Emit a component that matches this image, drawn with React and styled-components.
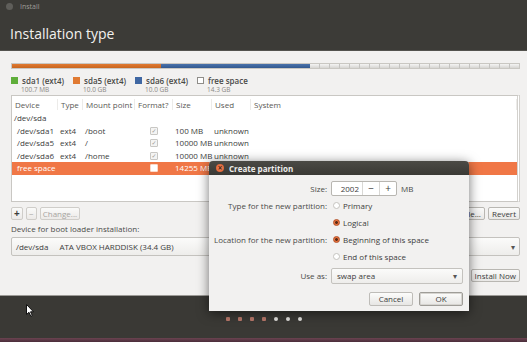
import React from "react"
import styled, { createGlobalStyle } from "styled-components"

const partitions = [
  { name: "sda1 (ext4)", size: "100.7 MB", color: "#5fae3a" },
  { name: "sda5 (ext4)", size: "10.0 GB", color: "#e07a32" },
  { name: "sda6 (ext4)", size: "10.0 GB", color: "#3f67a3" },
  { name: "free space", size: "14.3 GB", color: "#ffffff" },
]

const rows = [
  { device: "/dev/sda", top: true },
  { device: "/dev/sda1", type: "ext4", mount: "/boot", format: true, size: "100 MB", used: "unknown" },
  { device: "/dev/sda5", type: "ext4", mount: "/", format: true, size: "10000 MB", used: "unknown" },
  { device: "/dev/sda6", type: "ext4", mount: "/home", format: true, size: "10000 MB", used: "unknown" },
  { device: "free space", format: false, size: "14255 MB", selected: true },
]

const columns = ["Device", "Type", "Mount point", "Format?", "Size", "Used", "System"]

const App = () => (
  <Window>
    <GlobalStyle />
    <Header>
      <TitleBar>
        <WinDot />
        <WinTitle>Install</WinTitle>
      </TitleBar>
      <PageTitle>Installation type</PageTitle>
    </Header>

    <Content>
      <DiskBar>
        <Segment $w={149} $color="#e07a32" $dark="#c9661f" />
        <Segment $w={149} $color="#4a72ab" $dark="#33598f" />
        <FreeSegment />
      </DiskBar>

      <Legend>
        {partitions.map(p => (
          <LegendItem key={p.name}>
            <LegendName>
              <Swatch $color={p.color} />
              {p.name}
            </LegendName>
            <LegendSize>{p.size}</LegendSize>
          </LegendItem>
        ))}
      </Legend>

      <Table>
        <HeadRow>
          {columns.map(c => <HeadCell key={c}>{c}</HeadCell>)}
        </HeadRow>
        {rows.map(r => (
          <Row key={r.device} $selected={r.selected}>
            <Cell $indent={!r.top}>{r.device}</Cell>
            <Cell>{r.type}</Cell>
            <Cell>{r.mount}</Cell>
            <CheckCell>
              {r.format !== undefined && <Check $checked={r.format} $selected={r.selected}>{r.format ? "✓" : ""}</Check>}
            </CheckCell>
            <Cell>{r.size}</Cell>
            <Cell>{r.used}</Cell>
            <Cell />
          </Row>
        ))}
      </Table>

      <Toolbar>
        <ToolGroup>
          <SmallButton $bold>+</SmallButton>
          <SmallButton $muted>−</SmallButton>
          <SmallButton $muted>Change...</SmallButton>
        </ToolGroup>
        <ToolGroup>
          <Button>New Partition Table...</Button>
          <Button>Revert</Button>
        </ToolGroup>
      </Toolbar>

      <FieldLabel>Device for boot loader installation:</FieldLabel>
      <Combo>
        <span>/dev/sda</span>
        <ComboText>ATA VBOX HARDDISK (34.4 GB)</ComboText>
        <Arrow>▾</Arrow>
      </Combo>

      <Actions>
        <Button>Install Now</Button>
      </Actions>
    </Content>

    <Footer>
      <Dots>
        {[0, 1, 2, 3, 4, 5, 6].map(i => <Dot key={i} $done={i < 4} />)}
      </Dots>
    </Footer>
    <Strip />

    <Cursor width="8" height="13" viewBox="0 0 8 13">
      <path d="M0.5 0.5 L0.5 10.5 L3 8.3 L4.8 12.3 L6.3 11.6 L4.5 7.8 L7.5 7.8 Z" fill="#fff" stroke="#111" strokeWidth="1" />
    </Cursor>

    <Dialog>
      <DialogTitle>
        <CloseButton>×</CloseButton>
        Create partition
      </DialogTitle>
      <DialogBody>
        <FormLabel>Size:</FormLabel>
        <Inline>
          <SpinBox>
            <SpinValue>2002</SpinValue>
            <SpinButton>−</SpinButton>
            <SpinButton>+</SpinButton>
          </SpinBox>
          <Unit>MB</Unit>
        </Inline>

        <FormLabel>Type for the new partition:</FormLabel>
        <Radio>Primary</Radio>
        <span />
        <Radio $on>Logical</Radio>

        <FormLabel>Location for the new partition:</FormLabel>
        <Radio $on>Beginning of this space</Radio>
        <span />
        <Radio>End of this space</Radio>

        <FormLabel $gap>Use as:</FormLabel>
        <Select $gap>
          swap area
          <Arrow>▾</Arrow>
        </Select>
      </DialogBody>
      <DialogButtons>
        <DialogButton>Cancel</DialogButton>
        <DialogButton $default>OK</DialogButton>
      </DialogButtons>
    </Dialog>
  </Window>
)

const Radio = ({ $on, children }) => (
  <RadioRow>
    <RadioDot $on={$on} />
    {children}
  </RadioRow>
)

const GlobalStyle = createGlobalStyle`
  html, body {
    margin: 0;
    padding: 0;
    background: #3a3935;
  }
  body {
    font-family: "Open Sans", "DejaVu Sans", sans-serif;
    color: #3c3c3c;
  }
`

const Window = styled.div`
  position: relative;
  width: 527px;
  height: 342px;
  display: flex;
  flex-direction: column;
  overflow: hidden;
  font-size: 8px;
`

const Header = styled.div`
  height: 50px;
  background: #3c3b37;
  border-bottom: 1px solid #54534e;
  display: flex;
  flex-direction: column;
`

const TitleBar = styled.div`
  height: 12px;
  display: flex;
  align-items: center;
  gap: 7px;
  padding-left: 6px;
`

const WinDot = styled.div`
  width: 7px;
  height: 7px;
  border-radius: 50%;
  background: #5f5e5a;
`

const WinTitle = styled.div`
  font-size: 7px;
  color: #9f9d98;
`

const PageTitle = styled.div`
  margin-top: 12px;
  padding-left: 10px;
  font-size: 14px;
  color: #f2f1ee;
`

const Content = styled.div`
  flex: 1;
  background: #f2f1f0;
  padding: 12px 7px 0 11px;
  display: flex;
  flex-direction: column;
`

const DiskBar = styled.div`
  height: 6px;
  display: flex;
  border: 1px solid #c9c7c2;
  box-sizing: border-box;
`

const Segment = styled.div`
  width: ${p => p.$w}px;
  background: linear-gradient(${p => p.$color}, ${p => p.$dark});
`

const FreeSegment = styled.div`
  flex: 1;
  background:
    repeating-linear-gradient(90deg, transparent 0 9px, #c4c3c0 9px 10px),
    linear-gradient(#f4f4f3, #d6d5d2);
`

const Legend = styled.div`
  display: flex;
  margin-top: 6px;
  height: 20px;
`

const LegendItem = styled.div`
  width: 62px;
`

const LegendName = styled.div`
  display: flex;
  align-items: center;
  gap: 4px;
  font-weight: 600;
  color: #4a4a48;
`

const Swatch = styled.span`
  width: 5px;
  height: 5px;
  background: ${p => p.$color};
  border: 1px solid ${p => (p.$color === "#ffffff" ? "#8f8d89" : p.$color)};
`

const LegendSize = styled.div`
  padding-left: 10px;
  font-size: 6.5px;
  color: #8a8884;
  line-height: 8px;
`

const Table = styled.div`
  height: 107px;
  box-sizing: border-box;
  background: #fff;
  border: 1px solid #c9c7c3;
  border-right: 3px double #d3d1cd;
`

const grid = `
  display: grid;
  grid-template-columns: 46px 25px 52px 38px 39px 39px 1fr;
  align-items: center;
`

const HeadRow = styled.div`
  ${grid}
  height: 16px;
`

const HeadCell = styled.div`
  padding-left: 3px;
  color: #5a5956;
  border-right: 1px solid #ecebe9;
  line-height: 11px;
`

const Row = styled.div`
  ${grid}
  height: 12.5px;
  background: ${p => (p.$selected ? "#f07746" : "transparent")};
  color: ${p => (p.$selected ? "#fff" : "#3c3c3c")};
`

const Cell = styled.div`
  padding-left: ${p => (p.$indent ? "5px" : "2px")};
  white-space: nowrap;
  line-height: 12px;
`

const CheckCell = styled.div`
  display: flex;
  justify-content: center;
`

const Check = styled.div`
  width: 6px;
  height: 6px;
  border: 1px solid ${p => (p.$selected ? "#fbd9c9" : "#c8c7c4")};
  border-radius: 1px;
  background: ${p => (p.$selected ? "#fff" : "#f4f4f3")};
  color: #9a9995;
  font-size: 6px;
  line-height: 6px;
  text-align: center;
`

const Toolbar = styled.div`
  margin-top: 5px;
  display: flex;
  justify-content: space-between;
`

const ToolGroup = styled.div`
  display: flex;
  gap: 3px;
`

const SmallButton = styled.div`
  height: 13px;
  min-width: 11px;
  padding: 0 2px;
  box-sizing: border-box;
  border: 1px solid #cfcdc9;
  border-radius: 2px;
  background: linear-gradient(#fafaf9, #eceae8);
  color: ${p => (p.$muted ? "#a6a4a0" : "#3c3c3c")};
  font-weight: ${p => (p.$bold ? 700 : 400)};
  font-size: ${p => (p.$bold ? "10px" : "8px")};
  line-height: 11px;
  text-align: center;
`

const Button = styled.div`
  height: 13px;
  padding: 0 3px;
  box-sizing: border-box;
  border: 1px solid #b9b7b2;
  border-radius: 2px;
  background: linear-gradient(#fbfbfa, #e9e8e6);
  line-height: 11px;
  white-space: nowrap;
`

const FieldLabel = styled.div`
  margin-top: 3px;
  line-height: 12px;
  color: #4a4a48;
`

const Combo = styled.div`
  margin-top: 2px;
  height: 19px;
  box-sizing: border-box;
  border: 1px solid #c4c2be;
  border-radius: 2px;
  background: linear-gradient(#fbfbfa, #eeedeb);
  display: flex;
  align-items: center;
  padding: 0 4px;
  gap: 11px;
`

const ComboText = styled.span`
  flex: 1;
`

const Arrow = styled.span`
  font-size: 8px;
  color: #555;
  margin-left: auto;
`

const Actions = styled.div`
  margin-top: 13px;
  display: flex;
  justify-content: flex-end;
`

const Footer = styled.div`
  height: 43px;
  background: #3a3935;
  border-top: 1px solid #9c9a96;
  display: flex;
  justify-content: center;
  padding-top: 21px;
  box-sizing: border-box;
`

const Dots = styled.div`
  display: flex;
  gap: 8px;
  height: 5px;
`

const Dot = styled.div`
  width: 4px;
  height: 4px;
  border-radius: ${p => (p.$done ? "1px" : "50%")};
  background: ${p => (p.$done ? "#b9786a" : "#e4e3e0")};
`

const Strip = styled.div`
  height: 4px;
  background: linear-gradient(#6b4350, #4a2d3a);
`

const Cursor = styled.svg`
  position: absolute;
  left: 26px;
  top: 304px;
`

const Dialog = styled.div`
  position: absolute;
  left: 209px;
  top: 161px;
  width: 260px;
  height: 150px;
  background: #f2f1f0;
  border-radius: 4px 4px 0 0;
  box-shadow: 0 2px 12px rgba(0, 0, 0, 0.55);
  display: flex;
  flex-direction: column;
`

const DialogTitle = styled.div`
  height: 14px;
  background: linear-gradient(#4b4a45, #3a3935);
  border-radius: 4px 4px 0 0;
  display: flex;
  align-items: center;
  gap: 5px;
  padding-left: 7px;
  color: #eeedeb;
  font-weight: 700;
  font-size: 8px;
`

const CloseButton = styled.div`
  width: 8px;
  height: 8px;
  border-radius: 50%;
  background: radial-gradient(#f08a5c, #d9572b);
  color: #4a2518;
  font-size: 8px;
  line-height: 8px;
  text-align: center;
  font-weight: 700;
`

const DialogBody = styled.div`
  display: grid;
  grid-template-columns: 118px 1fr;
  grid-auto-rows: 17px;
  column-gap: 4px;
  padding-top: 5px;
  align-items: center;
`

const FormLabel = styled.div`
  text-align: right;
  white-space: nowrap;
  color: #4a4a48;
  margin-top: ${p => (p.$gap ? "4px" : "0")};
`

const Inline = styled.div`
  display: flex;
  align-items: center;
  gap: 4px;
`

const SpinBox = styled.div`
  width: 66px;
  height: 15px;
  box-sizing: border-box;
  border: 1px solid #b8b6b1;
  border-radius: 2px;
  background: #fff;
  display: flex;
  align-items: center;
`

const SpinValue = styled.div`
  flex: 1;
  text-align: right;
  padding-right: 3px;
  border-right: 1px solid #d9d8d5;
  line-height: 13px;
`

const SpinButton = styled.div`
  width: 16px;
  text-align: center;
  font-size: 10px;
  line-height: 13px;
  border-right: 1px solid #d9d8d5;
  &:last-child { border-right: none; }
`

const Unit = styled.span`
  color: #4a4a48;
`

const RadioRow = styled.div`
  display: flex;
  align-items: center;
  gap: 3px;
  padding-left: 2px;
`

const RadioDot = styled.span`
  width: 7px;
  height: 7px;
  box-sizing: border-box;
  border-radius: 50%;
  border: 1px solid ${p => (p.$on ? "#b34d22" : "#c5c3bf")};
  background: ${p => (p.$on ? "radial-gradient(#5a2a16 0 1.2px, #e9743f 1.6px)" : "#fff")};
`

const Select = styled.div`
  margin-top: ${p => (p.$gap ? "4px" : "0")};
  width: 132px;
  height: 16px;
  box-sizing: border-box;
  border: 1px solid #c4c2be;
  border-radius: 2px;
  background: linear-gradient(#fbfbfa, #eeedeb);
  display: flex;
  align-items: center;
  padding: 0 5px;
`

const DialogButtons = styled.div`
  display: flex;
  justify-content: flex-end;
  gap: 6px;
  padding: 10px 6px 0 0;
`

const DialogButton = styled.div`
  width: 44px;
  height: 14px;
  box-sizing: border-box;
  border: 1px solid ${p => (p.$default ? "#9f9d98" : "#bebcb8")};
  border-radius: 2px;
  background: linear-gradient(#fcfcfb, #e7e6e4);
  text-align: center;
  line-height: 12px;
  box-shadow: ${p => (p.$default ? "inset 0 0 0 1px #d6d4d0" : "none")};
`

export default App
